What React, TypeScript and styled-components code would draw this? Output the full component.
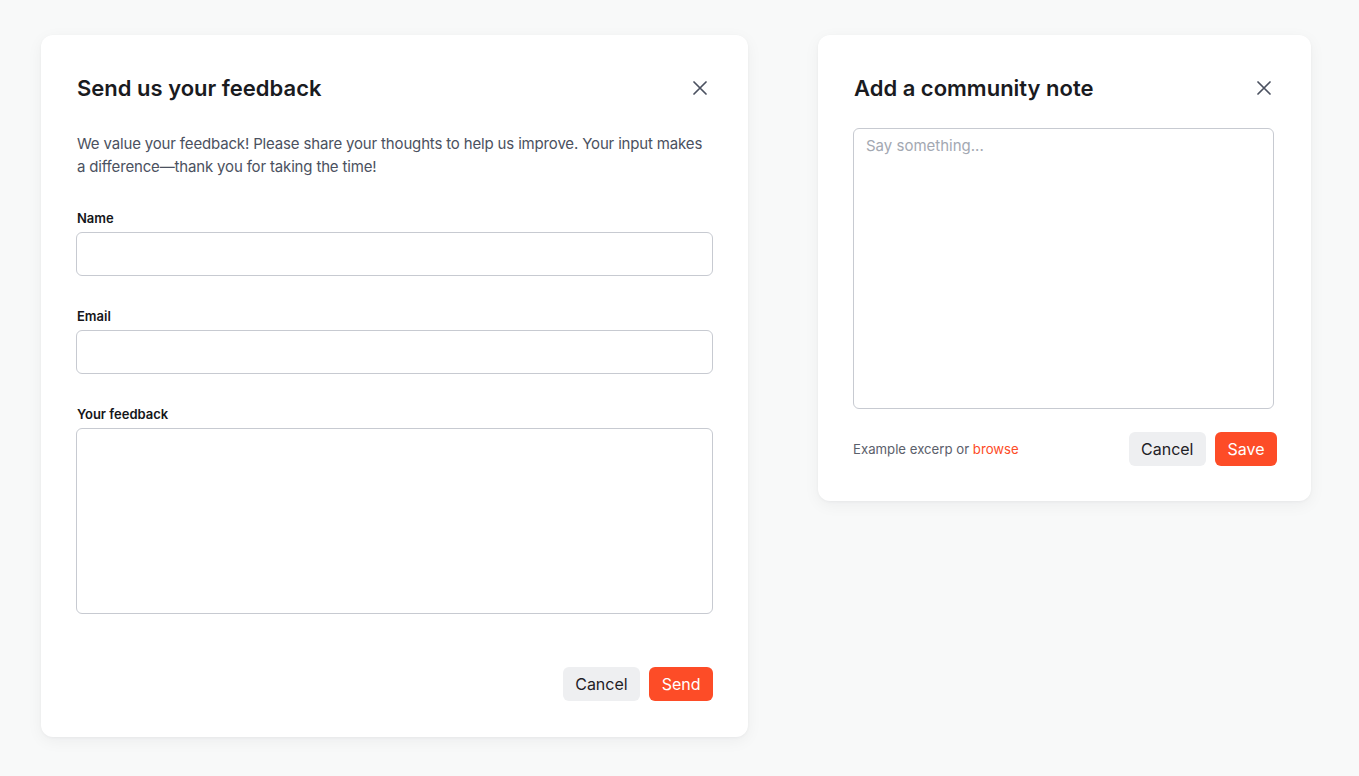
import { styled, createGlobalStyle } from "styled-components";

const GlobalStyle = createGlobalStyle`
  * {
    box-sizing: border-box;
  }
  body {
    margin: 0;
    background: #f8f9f9;
    font-family: Inter, "Noto Sans", sans-serif;
    color: #1c1d21;
  }
`;

const CloseIcon = () => (
  <svg width="14" height="14" viewBox="0 0 14 14" fill="none">
    <path d="M1 1L13 13M13 1L1 13" stroke="#4b5160" strokeWidth="1.7" strokeLinecap="round" />
  </svg>
);

const FeedbackDialog = () => (
  <Card $width={707} $padRight={35} $padBottom={36}>
    <Header>
      <Title>Send us your feedback</Title>
      <CloseButton aria-label="Close">
        <CloseIcon />
      </CloseButton>
    </Header>
    <Description>
      We value your feedback! Please share your thoughts to help us improve. Your input makes
      a difference—thank you for taking the time!
    </Description>
    <Fields>
      <Field>
        <Label>Name</Label>
        <TextInput type="text" />
      </Field>
      <Field>
        <Label>Email</Label>
        <TextInput type="email" />
      </Field>
      <Field>
        <Label>Your feedback</Label>
        <TextArea $height={186} />
      </Field>
    </Fields>
    <Footer $gap={53}>
      <span />
      <Actions>
        <Button>Cancel</Button>
        <Button $primary>Send</Button>
      </Actions>
    </Footer>
  </Card>
);

const NoteDialog = () => (
  <Card $width={493} $padRight={34} $padBottom={35}>
    <Header>
      <Title>Add a community note</Title>
      <CloseButton aria-label="Close">
        <CloseIcon />
      </CloseButton>
    </Header>
    <NoteArea placeholder="Say something..." />
    <Footer $gap={23}>
      <Hint>
        Example excerp or <Link href="#">browse</Link>
      </Hint>
      <Actions>
        <Button>Cancel</Button>
        <Button $primary>Save</Button>
      </Actions>
    </Footer>
  </Card>
);

export default function App() {
  return (
    <>
      <GlobalStyle />
      <Page>
        <FeedbackDialog />
        <NoteDialog />
      </Page>
    </>
  );
}

const Page = styled.div`
  display: flex;
  align-items: flex-start;
  gap: 70px;
  padding: 35px 0 0 41px;
  min-height: 100vh;
`;

const Card = styled.div<{ $width: number; $padRight: number; $padBottom: number }>`
  width: ${props => props.$width}px;
  background: #ffffff;
  border-radius: 12px;
  padding: 36px ${props => props.$padRight}px ${props => props.$padBottom}px 35px;
  box-shadow:
    0 1px 3px rgba(20, 24, 32, 0.04),
    0 4px 16px rgba(20, 24, 32, 0.05);
  display: flex;
  flex-direction: column;
`;

const Header = styled.div`
  display: flex;
  align-items: center;
  justify-content: space-between;
  height: 34px;
`;

const Title = styled.h2`
  margin: 0 0 0 1px;
  font-size: 22px;
  font-weight: 600;
  color: #1a1b1f;
  line-height: 34px;
`;

const CloseButton = styled.button`
  display: flex;
  align-items: center;
  justify-content: center;
  width: 22px;
  height: 22px;
  padding: 0;
  margin-right: 2px;
  border: none;
  background: none;
  cursor: pointer;
`;

const Description = styled.p`
  margin: 27px 0 0 1px;
  font-size: 15px;
  line-height: 23px;
  letter-spacing: -0.16px;
  color: #4b5160;
`;

const Fields = styled.div`
  display: flex;
  flex-direction: column;
  gap: 31px;
  margin-top: 31px;
`;

const Field = styled.div`
  display: flex;
  flex-direction: column;
  gap: 5px;
`;

const Label = styled.label`
  font-size: 13px;
  font-weight: 600;
  line-height: 18px;
  color: #15161a;
  margin-left: 1px;
`;

const TextInput = styled.input`
  width: 100%;
  height: 44px;
  border: 1px solid #c7cad1;
  border-radius: 6px;
  padding: 0 12px;
  font: inherit;
  font-size: 15px;
  background: #fff;
  outline: none;
`;

const TextArea = styled.textarea<{ $height: number }>`
  width: 100%;
  height: ${props => props.$height}px;
  border: 1px solid #c7cad1;
  border-radius: 6px;
  padding: 10px 12px;
  font: inherit;
  font-size: 15px;
  resize: none;
  outline: none;
  display: block;
`;

const NoteArea = styled.textarea`
  display: block;
  width: 421px;
  height: 281px;
  margin-top: 23px;
  border: 1px solid #c7cad1;
  border-radius: 6px;
  padding: 7px 12px;
  font: inherit;
  font-size: 15px;
  line-height: 20px;
  resize: none;
  outline: none;

  &::placeholder {
    color: #a3a8b2;
  }
`;

const Footer = styled.div<{ $gap: number }>`
  display: flex;
  align-items: center;
  justify-content: space-between;
  margin-top: ${props => props.$gap}px;
`;

const Actions = styled.div`
  display: flex;
  gap: 9px;
`;

const Button = styled.button<{ $primary?: boolean }>`
  height: 34px;
  padding: 0 12.5px;
  border: none;
  border-radius: 6px;
  font-family: Inter, "Noto Sans", sans-serif;
  font-size: 16px;
  cursor: pointer;
  background: ${props => (props.$primary ? "#fd4c27" : "#eeeff1")};
  color: ${props => (props.$primary ? "#ffffff" : "#1f2126")};
`;

const Hint = styled.span`
  font-size: 13.2px;
  color: #5b606b;
`;

const Link = styled.a`
  color: #fd4c27;
  text-decoration: none;
`;
